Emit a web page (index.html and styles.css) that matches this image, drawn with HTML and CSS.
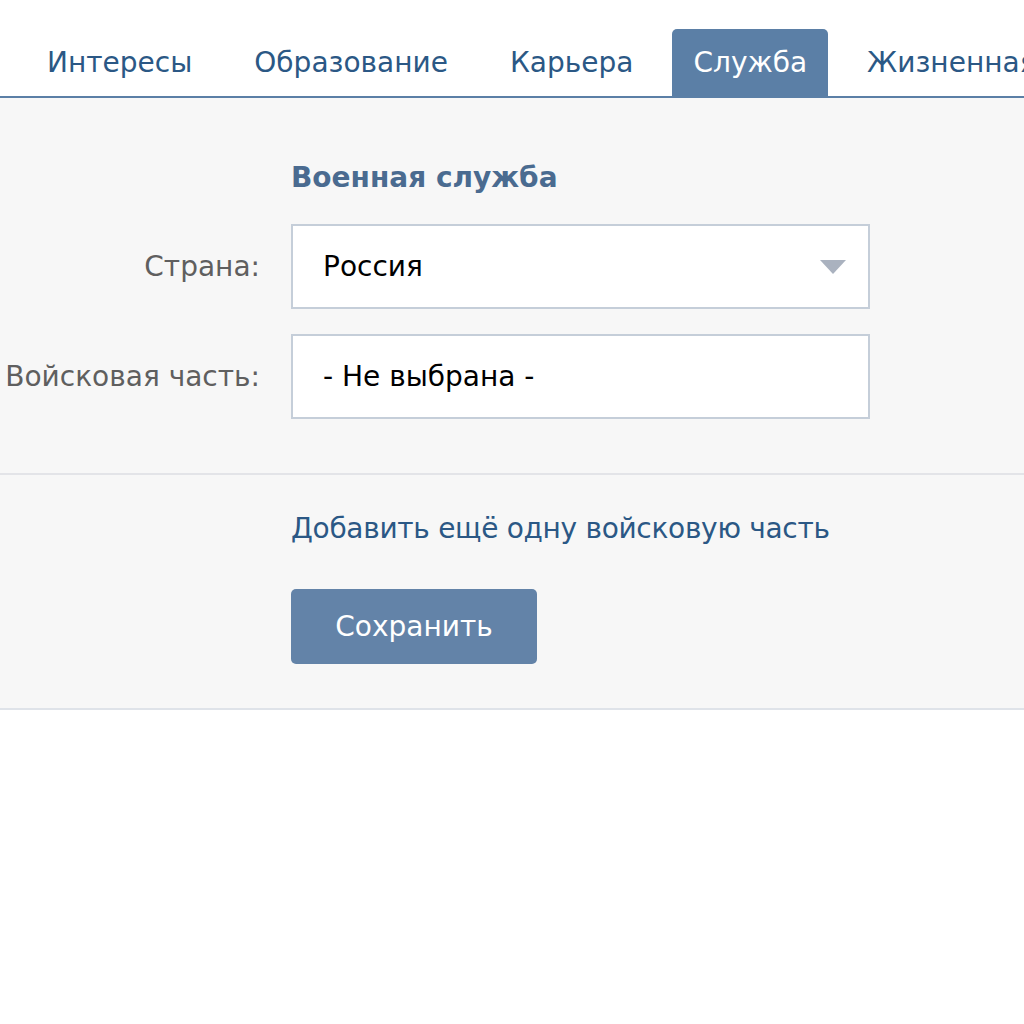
FILE: index.html
```html
<!DOCTYPE html>
<html lang="ru">
<head>
    <meta charset="UTF-8">
    <title>Служба</title>
    <link rel="stylesheet" href="styles.css">
</head>
<body>
    <div class="tabs">
        <a class="tab">Интересы</a>
        <a class="tab">Образование</a>
        <a class="tab">Карьера</a>
        <a class="tab tab-active">Служба</a>
        <a class="tab">Жизненная позиция</a>
    </div>

    <div class="panel">
        <div class="form-section">
            <div class="form-row form-head">
                <div class="form-label"></div>
                <div class="form-heading">Военная служба</div>
            </div>
            <div class="form-row">
                <div class="form-label">Страна:</div>
                <div class="field field-select">
                    <span>Россия</span>
                    <span class="arrow"></span>
                </div>
            </div>
            <div class="form-row">
                <div class="form-label">Войсковая часть:</div>
                <div class="field">
                    <span>- Не выбрана -</span>
                </div>
            </div>
        </div>

        <div class="form-section form-footer">
            <div class="form-row">
                <div class="form-label"></div>
                <div class="footer-body">
                    <a class="add-link">Добавить ещё одну войсковую часть</a>
                    <button type="button" class="save-btn">Сохранить</button>
                </div>
            </div>
        </div>
    </div>
</body>
</html>
```

FILE: styles.css
```css
body {
    margin: 0;
    background: #fff;
    font-family: "DejaVu Sans", Tahoma, sans-serif;
    font-size: 28px;
    overflow: hidden;
}
.tabs {
    display: flex;
    gap: 16px;
    padding: 29px 0 0 24px;
    border-bottom: 2px solid #5b7fa6;
    white-space: nowrap;
}
.tab {
    height: 67px;
    line-height: 67px;
    padding: 0 23px;
    color: #2b5885;
    border-radius: 5px 5px 0 0;
    flex-shrink: 0;
}
.tab-active {
    background: #5b7fa6;
    color: #fff;
    padding: 0 21px;
}
.panel {
    background: #f7f7f7;
    border-bottom: 2px solid #dfe3e9;
}
.form-section {
    padding: 63px 0 54px;
}
.form-footer {
    border-top: 2px solid #e3e4e8;
    padding: 37px 0 44px;
}
.form-row {
    display: flex;
    align-items: center;
    gap: 31px;
    margin-bottom: 25px;
}
.form-row:last-child {
    margin-bottom: 0;
}
.form-head {
    margin-bottom: 29px;
}
.form-label {
    width: 260px;
    flex-shrink: 0;
    text-align: right;
    color: #5f5f5f;
    white-space: nowrap;
}
.form-heading {
    font-weight: bold;
    color: #4a6b90;
    line-height: 34px;
}
.field {
    box-sizing: border-box;
    width: 579px;
    height: 85px;
    border: 2px solid #c5ced9;
    background: #fff;
    display: flex;
    align-items: center;
    justify-content: space-between;
    padding: 0 22px 0 30px;
    color: #000;
}
.arrow {
    width: 0;
    height: 0;
    border-left: 13px solid transparent;
    border-right: 13px solid transparent;
    border-top: 14px solid #aab2bf;
}
.footer-body {
    display: flex;
    flex-direction: column;
    align-items: flex-start;
    gap: 43px;
}
.add-link {
    color: #2b5885;
    line-height: 34px;
    letter-spacing: -0.3px;
}
.save-btn {
    width: 246px;
    height: 75px;
    border: none;
    border-radius: 5px;
    background: #6383a8;
    color: #fff;
    font-family: inherit;
    font-size: 28px;
}
```
